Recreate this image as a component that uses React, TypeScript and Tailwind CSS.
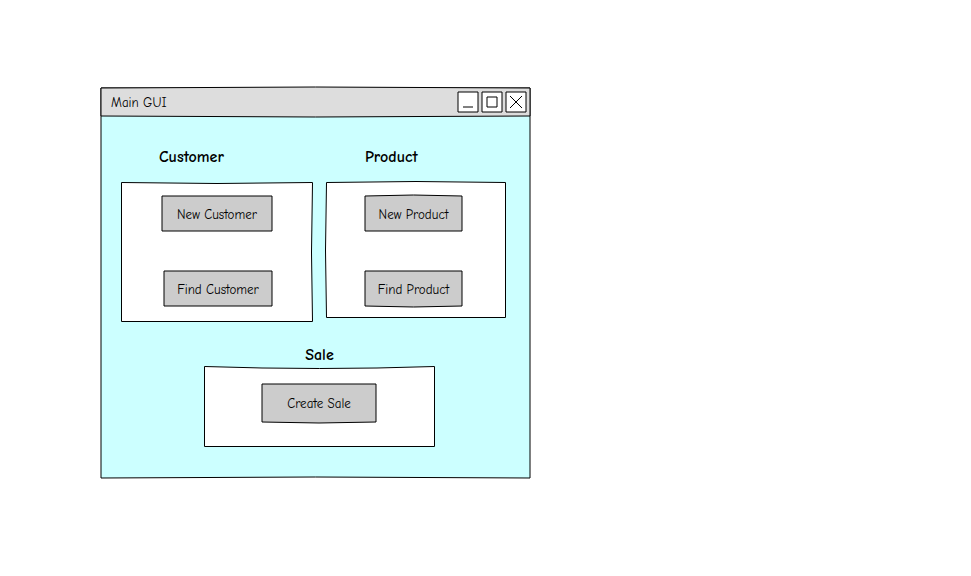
import type { ReactNode } from "react";

type Bend = { top?: number; right?: number; bottom?: number; left?: number };

type SketchFrameProps = {
  width: number;
  height: number;
  fill: string;
  bend?: Bend;
  crisp?: boolean;
};

/* Hand-drawn outline: every side is a curve that may bow by a pixel or two. */
function SketchFrame({ width, height, fill, bend = {}, crisp = false }: SketchFrameProps) {
  const a = crisp ? 0.5 : 0;
  const r = width - a;
  const b = height - a;
  const { top = 0, right = 0, bottom = 0, left = 0 } = bend;
  const d = [
    `M${a} ${a}`,
    `Q${width / 2} ${a + top * 2} ${r} ${a}`,
    `Q${r + right * 2} ${height / 2} ${r} ${b}`,
    `Q${width / 2} ${b + bottom * 2} ${a} ${b}`,
    `Q${a + left * 2} ${height / 2} ${a} ${a}Z`,
  ].join("");
  return (
    <svg
      aria-hidden="true"
      className="pointer-events-none absolute inset-0 h-full w-full overflow-visible"
      viewBox={`0 0 ${width} ${height}`}
      preserveAspectRatio="none"
    >
      <path d={d} fill={fill} stroke="#000" vectorEffect="non-scaling-stroke" />
    </svg>
  );
}

function WindowButton({ label, children }: { label: string; children: ReactNode }) {
  return (
    <button type="button" aria-label={label} className="block h-5 w-5">
      <svg className="h-5 w-5 overflow-visible" viewBox="0 0 20 20" fill="none" stroke="#000">
        <path d="M0 0H20V20H0Z" fill="#fff" />
        {children}
      </svg>
    </button>
  );
}

type ActionProps = { className: string; width: number; height: number; bend?: Bend; children: string };

function Action({ className, width, height, bend, children }: ActionProps) {
  return (
    <button
      type="button"
      className={`relative pt-0.5 text-center text-[13px] leading-5 font-medium whitespace-nowrap ${className}`}
    >
      <SketchFrame width={width} height={height} fill="#ccc" bend={bend} />
      <span className="relative">{children}</span>
    </button>
  );
}

export default function App() {
  return (
    <main className="min-h-screen bg-white pt-[88px] pl-[101px] font-['Comic_Sans_MS','Comic_Neue','Open_Sans',sans-serif] text-black">
      <div className="relative w-full max-w-[429px]">
        <SketchFrame width={429} height={390} fill="#ccffff" bend={{ bottom: -1 }} />

        <header className="relative flex h-7 items-center justify-between pr-1 pl-[10px]">
          <SketchFrame width={429} height={28} fill="#ddd" bend={{ top: -1, bottom: 1 }} />
          <h1 className="relative pt-0.5 text-[13px] leading-5 font-medium">Main GUI</h1>
          <div className="relative flex gap-1">
            <WindowButton label="Minimize">
              <path d="M5 15H15" />
            </WindowButton>
            <WindowButton label="Maximize">
              <path d="M5 5H15V15H5Z" />
            </WindowButton>
            <WindowButton label="Close">
              <path d="M4 4L16 16M16 4L4 16" />
            </WindowButton>
          </div>
        </header>

        <div className="relative flex flex-col pt-[31px] pb-[31px]">
          <div className="flex items-start gap-[13px] pl-5">
            <section className="w-[192px]">
              <h2 className="mb-[15px] pl-[38px] text-base leading-5 font-bold">Customer</h2>
              <div className="relative flex flex-col items-end gap-10 pt-[14px] pr-[41px] pb-4">
                <SketchFrame width={192} height={140} fill="#fff" bend={{ top: 1, right: -1 }} crisp />
                <Action className="h-[35px] w-[110px]" width={110} height={35}>New Customer</Action>
                <Action className="h-[35px] w-[108px]" width={108} height={35}>Find Customer</Action>
              </div>
            </section>

            <section className="w-[180px]">
              <h2 className="mb-[15px] pl-[39px] text-base leading-5 font-bold">Product</h2>
              <div className="relative flex flex-col items-start gap-10 pt-[14px] pb-3 pl-[39px]">
                <SketchFrame width={180} height={136} fill="#fff" bend={{ top: -1, left: -1 }} crisp />
                <Action className="h-[35px] w-[97px]" width={97} height={35} bend={{ top: -1 }}>New Product</Action>
                <Action className="h-[35px] w-[97px]" width={97} height={35} bend={{ bottom: 1 }}>Find Product</Action>
              </div>
            </section>
          </div>

          <section className="mt-[23px] ml-[103px] w-[231px]">
            <h2 className="mb-px text-center text-base leading-5 font-bold">Sale</h2>
            <div className="relative flex flex-col items-start pt-[18px] pb-[25px] pl-[58px]">
              <SketchFrame width={231} height={81} fill="#fff" bend={{ top: 2 }} crisp />
              <Action className="h-[38px] w-[114px]" width={114} height={38} bend={{ bottom: 1 }}>Create Sale</Action>
            </div>
          </section>
        </div>
      </div>
    </main>
  );
}
